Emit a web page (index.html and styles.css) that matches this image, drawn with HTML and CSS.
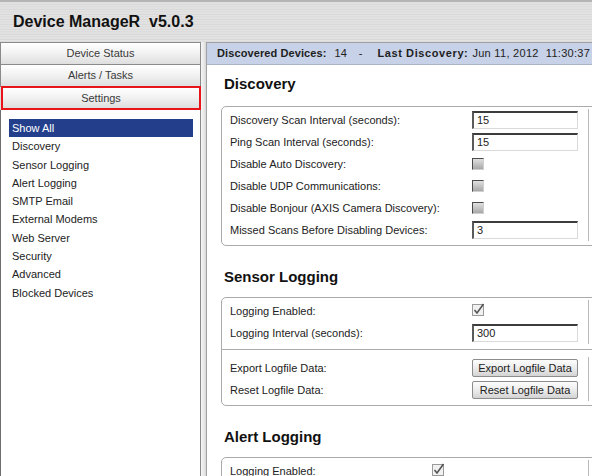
FILE: index.html
```html
<!DOCTYPE html>
<html>
<head>
<meta charset="utf-8">
<link rel="stylesheet" href="styles.css">
</head>
<body>
<header class="top"><h1 class="title">Device ManageR&nbsp; v5.0.3</h1></header>
<div class="main">
  <aside class="side">
    <div class="tab">Device Status</div>
    <div class="tab">Alerts / Tasks</div>
    <div class="tab active">Settings</div>
    <ul class="menu">
      <li class="sel">Show All</li>
      <li>Discovery</li>
      <li>Sensor Logging</li>
      <li>Alert Logging</li>
      <li>SMTP Email</li>
      <li>External Modems</li>
      <li>Web Server</li>
      <li>Security</li>
      <li>Advanced</li>
      <li>Blocked Devices</li>
    </ul>
  </aside>
  <div class="split"></div>
  <section class="content">
    <div class="status"><b class="s-lbl">Discovered Devices:</b><span class="s-num">14</span><span class="s-dash">-</span><b class="s-lbl2">Last Discovery:</b><span class="s-date">Jun 11, 2012</span><span class="s-time">11:30:37</span></div>
    <div class="pane">
      <h2 class="head first">Discovery</h2>
      <div class="box">
        <div class="sec">
          <div class="rows">
            <div class="row"><span class="lbl">Discovery Scan Interval (seconds):</span><span class="inp">15</span></div>
            <div class="row"><span class="lbl">Ping Scan Interval (seconds):</span><span class="inp">15</span></div>
            <div class="row"><span class="lbl">Disable Auto Discovery:</span><span class="cb"></span></div>
            <div class="row"><span class="lbl">Disable UDP Communications:</span><span class="cb"></span></div>
            <div class="row"><span class="lbl">Disable Bonjour (AXIS Camera Discovery):</span><span class="cb"></span></div>
            <div class="row"><span class="lbl">Missed Scans Before Disabling Devices:</span><span class="inp">3</span></div>
          </div>
          <div class="help"></div>
        </div>
      </div>

      <h2 class="head">Sensor Logging</h2>
      <div class="box">
        <div class="sec split-top">
          <div class="rows">
            <div class="row"><span class="lbl">Logging Enabled:</span><svg class="cbx" width="15" height="14" viewBox="0 0 15 14"><rect x="0.5" y="1.5" width="11" height="11" fill="#f1f1f1" stroke="#9a9a9a"/><path d="M2.5 7 L5 10 L11.5 1" fill="none" stroke="#555" stroke-width="1.6"/></svg></div>
            <div class="row"><span class="lbl">Logging Interval (seconds):</span><span class="inp">300</span></div>
          </div>
          <div class="help"></div>
        </div>
        <div class="sec btns">
          <div class="rows">
            <div class="row"><span class="lbl">Export Logfile Data:</span><span class="btn">Export Logfile Data</span></div>
            <div class="row"><span class="lbl">Reset Logfile Data:</span><span class="btn">Reset Logfile Data</span></div>
          </div>
          <div class="help"></div>
        </div>
      </div>

      <h2 class="head">Alert Logging</h2>
      <div class="box">
        <div class="sec narrow">
          <div class="rows">
            <div class="row"><span class="lbl">Logging Enabled:</span><svg class="cbx" width="15" height="14" viewBox="0 0 15 14"><rect x="0.5" y="1.5" width="11" height="11" fill="#f1f1f1" stroke="#9a9a9a"/><path d="M2.5 7 L5 10 L11.5 1" fill="none" stroke="#555" stroke-width="1.6"/></svg></div>
          </div>
          <div class="help"></div>
        </div>
      </div>
    </div>
  </section>
</div>
</body>
</html>
```
FILE: styles.css
```css
html, body {
  margin: 0;
  padding: 0;
  height: 100%;
  overflow: hidden;
}
body {
  font-family: "Liberation Sans", Arial, sans-serif;
  font-size: 11px;
  color: #222;
  background: repeating-linear-gradient(180deg, #e3e3e3 0 1px, #dcdcdc 1px 2px, #e1e1e1 2px 4px, #d9d9d9 4px 5px);
  border-top: 2px solid #b4b4b4;
  box-sizing: border-box;
  display: flex;
  flex-direction: column;
}
.top {
  height: 40px;
  display: flex;
  align-items: center;
  padding-left: 13px;
}
.title {
  margin: 0;
  font-size: 16px;
  font-weight: bold;
  color: #111;
}
.main {
  flex: 1;
  display: flex;
  min-height: 0;
}
.side {
  width: 201px;
  display: flex;
  flex-direction: column;
}
.tab {
  height: 21px;
  line-height: 21px;
  text-align: center;
  color: #3a3a3a;
  border: 1px solid #8a8a8a;
  border-top: none;
  background: linear-gradient(#ffffff, #f1f1f1 50%, #dedede);
}
.tab:first-child {
  border-top: 1px solid #8a8a8a;
}
.tab.active {
  margin: -1px 0 0 1px;
  height: 20px;
  line-height: 20px;
  border: 2px solid #e8141a;
}
.menu {
  flex: 1;
  list-style: none;
  margin: 0;
  padding: 9px 7px 0 8px;
  background: #fff;
  border-left: 1px solid #6e6e6e;
  border-right: 1px solid #8a8a8a;
}
.menu li {
  line-height: 18.3px;
  padding-left: 3px;
  color: #222;
}
.menu li.sel {
  background: #233f8c;
  color: #fff;
}
.split {
  width: 5px;
  background: linear-gradient(90deg, #f6f6f6, #e4e4e4 70%, #d4d4d4);
}
.content {
  flex: 1;
  min-width: 0;
  overflow: hidden;
  background: #fff;
  border-left: 1px solid #a2a2a2;
  border-top: 1px solid #a0a0a0;
}
.status {
  height: 21px;
  line-height: 21px;
  padding-left: 10px;
  background: #c7d1e7;
  border-bottom: 1px solid #aab3c8;
  white-space: nowrap;
  color: #222;
}
.status b {
  color: #1e1e1e;
}
.s-lbl {
  letter-spacing: 0.1px;
}
.s-num {
  margin-left: 8px;
}
.s-dash {
  margin-left: 12px;
}
.s-lbl2 {
  margin-left: 15px;
  letter-spacing: 0.6px;
}
.s-date {
  margin-left: 4px;
  letter-spacing: 0.3px;
}
.s-time {
  margin-left: 7px;
  letter-spacing: 0.3px;
}
.pane {
  padding-left: 14px;
}
.head {
  font-size: 15px;
  font-weight: bold;
  line-height: 18px;
  color: #111;
  margin: 22px 0 11px 3px;
}
.head.first {
  margin-top: 10px;
  margin-bottom: 13px;
}
.box {
  width: 640px;
  border: 1px solid #ababab;
  border-radius: 5px;
}
.sec {
  display: flex;
  padding: 2px 0 4px 8px;
}
.sec.split-top {
  padding-bottom: 5px;
}
.sec.btns {
  border-top: 1px solid #ababab;
  padding-top: 7px;
}
.rows {
  width: 358px;
}
.row {
  height: 22px;
  display: flex;
  align-items: center;
}
.lbl {
  width: 242px;
  flex: none;
}
.narrow .lbl {
  width: 202px;
}
.help {
  flex: 1;
  border-left: 1px solid #b9b9b9;
}
.inp {
  box-sizing: border-box;
  width: 106px;
  height: 18px;
  line-height: 15px;
  padding-left: 3px;
  border-style: solid;
  border-width: 2px 1px 1px 2px;
  border-color: #3c3c3c #dadada #dadada #5a5a5a;
  background: #fff;
}
.cb {
  box-sizing: border-box;
  width: 12px;
  height: 12px;
  border-style: solid;
  border-width: 1px;
  border-color: #4a4a4a #cfcfcf #cfcfcf #4a4a4a;
  background: linear-gradient(#e0e0e0, #a8a8a8);
}
.cbx {
  display: block;
  margin-top: -2px;
}
.btn {
  box-sizing: border-box;
  width: 106px;
  height: 18px;
  line-height: 16px;
  text-align: center;
  color: #222;
  border: 1px solid #8c8c8c;
  border-radius: 2px;
  background: linear-gradient(#fdfdfd, #ececec 50%, #d3d3d3);
}
```
